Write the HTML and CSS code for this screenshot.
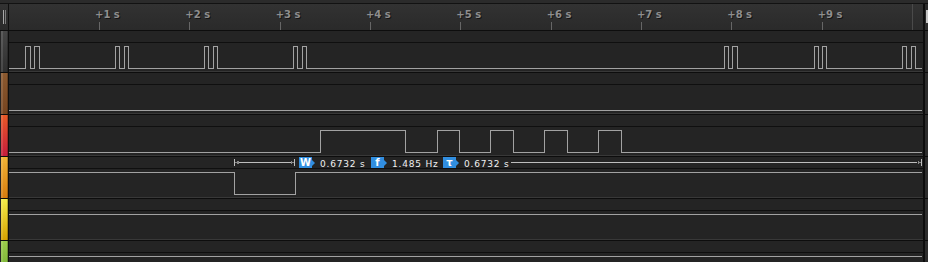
FILE: index.html
```html
<!DOCTYPE html>
<html lang="en">
<head>
    <meta charset="UTF-8">
    <meta name="viewport" content="width=device-width, initial-scale=1.0">
    <title>Capture</title>
    <link rel="stylesheet" href="styles.css">
</head>
<body>
<div class="scope">
    <div class="topband"></div>

    <!-- time ruler -->
    <div class="ruler-row">
        <div class="grip"><span></span><span></span></div>
        <div class="ruler">
            <div class="mark"><span>+1 s</span></div>
            <div class="mark"><span>+2 s</span></div>
            <div class="mark"><span>+3 s</span></div>
            <div class="mark"><span>+4 s</span></div>
            <div class="mark"><span>+5 s</span></div>
            <div class="mark"><span>+6 s</span></div>
            <div class="mark"><span>+7 s</span></div>
            <div class="mark"><span>+8 s</span></div>
            <div class="mark"><span>+9 s</span></div>
            <div class="mark end"></div>
        </div>
        <div class="gutter"><div class="thumb"></div></div>
    </div>

    <!-- channel 0 -->
    <div class="chan">
        <div class="swatch c0"></div>
        <div class="lane">
            <div class="strip"></div>
            <div class="wave">
                <svg width="914" height="28" viewBox="9 0 914 28"><path d="M9 25.5H25.5V3.5H30.5V25.5H34.5V3.5H39.5V25.5H115.5V3.5H119.5V25.5H124.5V3.5H128.5V25.5H204.5V3.5H208.5V25.5H213.5V3.5H217.5V25.5H293.5V3.5H297.5V25.5H302.5V3.5H306.5V25.5H724.5V3.5H728.5V25.5H732.5V3.5H737.5V25.5H814.5V3.5H818.5V25.5H822.5V3.5H826.5V25.5H902.5V3.5H906.5V25.5H911.5V3.5H915.5V25.5H922"/></svg>
            </div>
        </div>
        <div class="gutter"></div>
    </div>

    <!-- channel 1 -->
    <div class="chan">
        <div class="swatch c1"></div>
        <div class="lane">
            <div class="strip"></div>
            <div class="wave">
                <svg width="914" height="28" viewBox="9 0 914 28"><path d="M9 25.5H922"/></svg>
            </div>
        </div>
        <div class="gutter"></div>
    </div>

    <!-- channel 2 -->
    <div class="chan">
        <div class="swatch c2"></div>
        <div class="lane">
            <div class="strip"></div>
            <div class="wave">
                <svg width="914" height="28" viewBox="9 0 914 28"><path d="M9 25.5H320.5V3.5H405.5V25.5H437.5V3.5H459.5V25.5H490.5V3.5H513.5V25.5H544.5V3.5H567.5V25.5H598.5V3.5H621.5V25.5H922"/></svg>
            </div>
        </div>
        <div class="gutter"></div>
    </div>

    <!-- channel 3, with the pulse measurement -->
    <div class="chan">
        <div class="swatch c3"></div>
        <div class="lane">
            <div class="strip measure">
                <svg class="bracket" width="61" height="11" viewBox="0 0 61 11">
                    <path d="M0.5 2V9M60.5 2V9M1 5.5H60"/>
                    <path class="head" d="M1 5.5L4.5 3.5V7.5ZM60 5.5L56.5 3.5V7.5Z"/>
                </svg>
                <div class="tag first"><b>W</b></div>
                <div class="val">0.6732 s</div>
                <div class="tag"><b>f</b></div>
                <div class="val">1.485 Hz</div>
                <div class="tag"><b>τ</b></div>
                <div class="val">0.6732 s</div>
                <div class="tail">
                    <i></i>
                    <svg width="5" height="11" viewBox="0 0 5 11">
                        <path class="head" d="M4 5.5L0.5 3.5V7.5Z"/>
                        <path d="M4.5 2V9"/>
                    </svg>
                </div>
            </div>
            <div class="wave">
                <svg width="914" height="28" viewBox="9 0 914 28"><path d="M9 3.5H234.5V25.5H295.5V3.5H922"/></svg>
            </div>
        </div>
        <div class="gutter"></div>
    </div>

    <!-- channel 4 -->
    <div class="chan">
        <div class="swatch c4"></div>
        <div class="lane">
            <div class="strip"></div>
            <div class="wave">
                <svg width="914" height="28" viewBox="9 0 914 28"><path d="M9 3.5H922"/></svg>
            </div>
        </div>
        <div class="gutter"></div>
    </div>

    <!-- channel 5 -->
    <div class="chan">
        <div class="swatch c5"></div>
        <div class="lane">
            <div class="strip"></div>
            <div class="wave">
                <svg width="914" height="28" viewBox="9 0 914 28"><path d="M9 3.5H922"/></svg>
            </div>
        </div>
        <div class="gutter"></div>
    </div>
</div>
</body>
</html>
```

FILE: styles.css
```css
* { box-sizing: border-box; }

body {
    margin: 0;
    background: #262626;
    overflow: hidden;
    font-family: "DejaVu Sans", sans-serif;
}

.scope {
    width: 928px;
    height: 262px;
    overflow: hidden;
}

.topband {
    height: 4px;
    background: #2b2b2b;
    border-bottom: 1px solid #121212;
}

/* ruler */
.ruler-row {
    display: flex;
    height: 26px;
}
.grip {
    width: 9px;
    border-right: 1px solid #101010;
    background: linear-gradient(#323232, #2a2a2a);
    display: flex;
    gap: 1px;
    padding: 6px 0 0 3px;
}
.grip span {
    width: 1px;
    height: 14px;
    background: #a8a8a8;
}
.grip span + span { background: #7a7a7a; }

.ruler {
    width: 916px;
    border-right: 2px solid #0e0e0e;
    background: linear-gradient(#323232, #2a2a2a);
    display: flex;
    padding-left: 86px;
    overflow: hidden;
}
.mark {
    flex: 0 0 90.333px;
    display: flex;
    flex-direction: column;
    padding-top: 6px;
}
.mark span {
    font-weight: bold;
    font-size: 10px;
    line-height: 10px;
    color: #8e8e8e;
    text-shadow: 1px 1px 0 #141414;
    white-space: nowrap;
}
.mark::after {
    content: "";
    width: 1px;
    height: 8px;
    margin: auto 0 0 4px;
    background: #666;
}
.mark.end { padding-top: 0; }
.mark.end::after {
    height: 26px;
    background: #4a4a4a;
}

.gutter {
    width: 3px;
    background: #2c2c2c;
}
.ruler-row .gutter { padding-top: 6px; }
.thumb {
    width: 2px;
    height: 13px;
    margin-left: 1px;
    background: #c4c4c4;
}

/* channels */
.chan {
    display: flex;
    height: 42px;
    flex: none;
    border-top: 1px solid #0d0d0d;
}
.swatch {
    width: 9px;
    border-left: 1px solid #262626;
    border-right: 1px solid #0d0d0d;
    box-shadow: inset 2px 0 0 rgba(255,255,255,0.12), inset -1px 0 0 rgba(0,0,0,0.25);
}
.c0 { background: linear-gradient(#474747, #2f2f2f); }
.c1 { background: linear-gradient(#8c5a30, #764420); }
.c2 { background: linear-gradient(#e85a28, #c61c3c); }
.c3 { background: linear-gradient(#f2b436, #d67c0e); }
.c4 { background: linear-gradient(#f4ec4a, #d6a200); }
.c5 { background: linear-gradient(#9ccc4c, #6aa82a); }

.lane {
    width: 916px;
    border-right: 2px solid #0d0d0d;
    display: flex;
    flex-direction: column;
}
.strip {
    height: 12px;
    background: #242424;
    border-bottom: 1px solid #0f0f0f;
}
.wave {
    height: 29px;
    background: #242424;
    border-bottom: 1px solid #383838;
}
.wave svg { display: block; }
.wave path {
    fill: none;
    stroke: #a2a2a2;
    stroke-width: 1;
    shape-rendering: crispEdges;
}

/* measurement row */
.measure {
    display: flex;
    align-items: flex-start;
    padding-left: 225px;
}
.bracket { display: block; flex: none; }
.measure svg path {
    fill: none;
    stroke: #bdbdbd;
    stroke-width: 1;
    shape-rendering: crispEdges;
}
.measure svg path.head {
    fill: #8a8a8a;
    stroke: none;
}
.tag {
    display: flex;
    align-items: center;
    margin-left: 6px;
    flex: none;
}
.tag.first { margin-left: 4px; }
.tag b {
    width: 13px;
    height: 11px;
    background: #318ee0;
    color: #fff;
    font-size: 10px;
    line-height: 11px;
    text-align: center;
}
.tag::after {
    content: "";
    border-left: 3px solid #318ee0;
    border-top: 3px solid transparent;
    border-bottom: 3px solid transparent;
}
.val {
    flex: none;
    width: 45px;
    margin: 2px 0 0 5px;
    font-size: 9px;
    line-height: 11px;
    color: #f0f0f0;
    letter-spacing: 0.8px;
    white-space: nowrap;
}
.tail {
    flex: 1;
    display: flex;
    align-items: center;
    height: 11px;
    margin: 0 1px 0 2px;
}
.tail i {
    flex: 1;
    height: 1px;
    background: #bdbdbd;
}
.tail svg { display: block; }
```
